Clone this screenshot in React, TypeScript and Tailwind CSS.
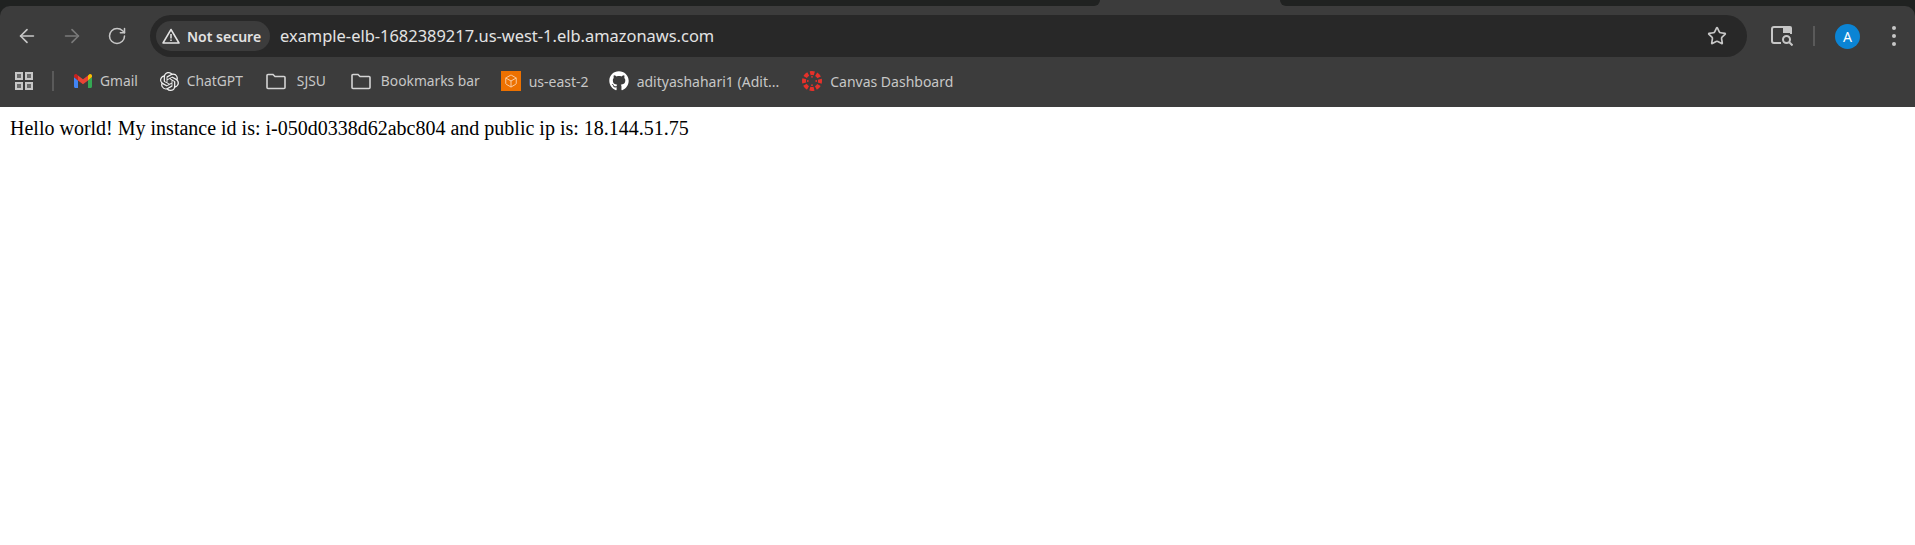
import { ArrowLeft, ArrowRight, Box, RotateCw, Star } from 'lucide-react';
import { FaGithub } from 'react-icons/fa';
import { SiOpenai } from 'react-icons/si';

function AppsIcon() {
  return (
    <svg width="18" height="18" viewBox="0 0 18 18" fill="#6a6a6a" stroke="#c7c7c7" strokeWidth="2">
      <rect x="1" y="1" width="6" height="6" />
      <rect x="11" y="1" width="6" height="6" />
      <rect x="1" y="11" width="6" height="6" />
      <rect x="11" y="11" width="6" height="6" />
    </svg>
  );
}

function GmailIcon() {
  return (
    <svg width="18" height="14" viewBox="0 0 18 14" fill="none">
      <path d="M0 3v9.5C0 13.3.7 14 1.5 14H4V6.5z" fill="#4285f4" />
      <path d="M14 6.5V14h2.5c.8 0 1.5-.7 1.5-1.5V3z" fill="#34a853" />
      <path d="M14 1.5v5L18 3V1.8C18 .3 16.3-.5 15.1.4z" fill="#fbbc04" />
      <path d="M4 6.500v-5L9 5.200l5-3.700v5L9 10.200z" fill="#ea4335" />
      <path d="M0 1.800V3l4 3.500v-5L2.900.4C1.700-.5 0 .3 0 1.800z" fill="#c5221f" />
    </svg>
  );
}

function FolderIcon() {
  return (
    <svg width="20" height="17" viewBox="0 0 20 17" fill="none" stroke="#d4d4d4" strokeWidth="1.600">
      <path d="M1 2.500a1 1 0 0 1 1-1h5l2 2h9a1 1 0 0 1 1 1v10a1 1 0 0 1-1 1H2a1 1 0 0 1-1-1z" />
    </svg>
  );
}

function WarningIcon() {
  return (
    <svg width="18" height="16" viewBox="0 0 18 16" fill="none" stroke="#e3e3e3" strokeWidth="1.500">
      <path d="M9 1.500L17 15H1z" strokeLinejoin="round" />
      <path d="M9 6v4.500M9 11.500v1.500" />
    </svg>
  );
}

function CanvasIcon() {
  return (
    <svg width="20" height="20" viewBox="0 0 20 20" fill="#e5312a">
      <circle cx="10" cy="10" r="8" fill="none" stroke="#e5312a" strokeWidth="4" strokeDasharray="4.300 1.983" strokeDashoffset="2.150" />
      <circle cx="10" cy="5.800" r="0.900" />
      <circle cx="10" cy="14.200" r="0.900" />
      <circle cx="5.800" cy="10" r="0.900" />
      <circle cx="14.200" cy="10" r="0.900" />
    </svg>
  );
}

function TabSearchIcon() {
  return (
    <svg width="22" height="20" viewBox="0 0 22 20" fill="none" stroke="#c7c7c7" strokeWidth="2">
      <path d="M10 17H3a2 2 0 0 1-2-2V3a2 2 0 0 1 2-2h16a1 1 0 0 1 1 1v6" />
      <path d="M12 2h8v5h-8z" fill="#c7c7c7" stroke="none" />
      <circle cx="15.500" cy="13.500" r="3.500" />
      <path d="M18 16l3.500 3.500" />
    </svg>
  );
}

const bookmarkText = 'text-[13.800px] text-[#c7c7c7] whitespace-nowrap';
const bookmarkTextWide = 'text-[14px] text-[#c7c7c7] whitespace-nowrap';

export default function App() {
  return (
    <div className="min-h-[545px] bg-white">
      <div className="bg-[#202221]">
        <div className="flex h-[6px] bg-[#3c3c3c]">
          <div className="w-[1100px] rounded-br-[8px] bg-[#202221]" />
          <div className="w-[180px]" />
          <div className="flex-1 rounded-bl-[8px] bg-[#202221]" />
        </div>
        <div className="h-[101px] rounded-t-[10px] bg-[#3c3c3c] font-['Noto_Sans',sans-serif]">
          <div className="flex h-[58px] items-center pt-[2px]">
            <ArrowLeft size={22} strokeWidth={1.800} className="ml-[16px] text-[#c7c7c7]" />
            <ArrowRight size={22} strokeWidth={1.800} className="ml-[23px] text-[#7a7a7a]" />
            <RotateCw size={20} strokeWidth={1.800} className="ml-[24px] text-[#c7c7c7]" />
            <div className="ml-[23px] flex h-[42px] w-[1597px] items-center rounded-full bg-[#282828]">
              <div className="ml-[6px] flex h-[30px] w-[114px] items-center rounded-full bg-[#3c3c3c]">
                <div className="ml-[6px]"><WarningIcon /></div>
                <span className="ml-[7px] whitespace-nowrap text-[14px] font-semibold text-[#e3e3e3]">Not secure</span>
              </div>
              <span className="ml-[10px] whitespace-nowrap text-[16.450px] text-[#e3e3e3]">example-elb-1682389217.us-west-1.elb.amazonaws.com</span>
              <Star size={20} strokeWidth={2} className="ml-auto mr-[20px] text-[#c7c7c7]" />
            </div>
            <div className="ml-[24px]"><TabSearchIcon /></div>
            <div className="ml-[20px] h-[20px] w-[2px] bg-[#5a5a5a]" />
            <div className="ml-[20px] flex h-[25px] w-[25px] items-center justify-center rounded-full bg-[#0b84d4] text-[14px] text-white">A</div>
            <div className="ml-[32px] flex flex-col gap-[4px]">
              <div className="h-[4px] w-[4px] rounded-full bg-[#c7c7c7]" />
              <div className="h-[4px] w-[4px] rounded-full bg-[#c7c7c7]" />
              <div className="h-[4px] w-[4px] rounded-full bg-[#c7c7c7]" />
            </div>
          </div>
          <div className="flex h-[43px] items-center pb-[9px]">
            <div className="ml-[15px]"><AppsIcon /></div>
            <div className="ml-[19px] h-[20px] w-[2px] bg-[#5a5a5a]" />
            <div className="ml-[20px]"><GmailIcon /></div>
            <span className={`ml-[8px] ${bookmarkText}`}>Gmail</span>
            <SiOpenai size={19} className="ml-[22px] text-[#f0f0f0]" />
            <span className={`ml-[8px] ${bookmarkText}`}>ChatGPT</span>
            <div className="ml-[23px]"><FolderIcon /></div>
            <span className={`ml-[11px] ${bookmarkText}`}>SJSU</span>
            <div className="ml-[25px]"><FolderIcon /></div>
            <span className={`ml-[10px] ${bookmarkText}`}>Bookmarks bar</span>
            <div className="ml-[21px] flex h-[20px] w-[20px] items-center justify-center bg-[#ed7100]">
              <Box size={14} strokeWidth={1.500} className="text-[#fbd9b8]" />
            </div>
            <span className={`ml-[8px] ${bookmarkTextWide}`}>us-east-2</span>
            <FaGithub size={20} className="ml-[20px] text-white" />
            <span className={`ml-[8px] ${bookmarkTextWide}`}>adityashahari1 (Adit...</span>
            <div className="ml-[23px]"><CanvasIcon /></div>
            <span className={`ml-[8px] ${bookmarkTextWide}`}>Canvas Dashboard</span>
          </div>
        </div>
      </div>
      <p className="pl-[10px] pt-[10px] font-['Liberation_Serif',serif] text-[20px] leading-[23px] text-black">
        Hello world! My instance id is: i-050d0338d62abc804 and public ip is: 18.144.51.75
      </p>
    </div>
  );
}
